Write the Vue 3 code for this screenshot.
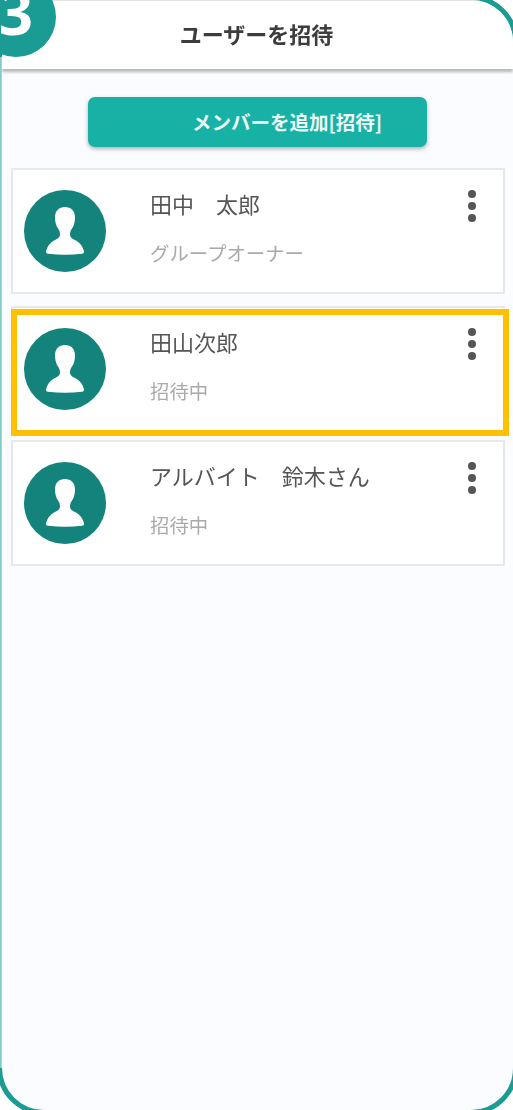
<template>
  <div class="page">
    <div class="frame">
      <header class="head">ユーザーを招待</header>

      <div class="btn-wrap">
        <button class="add-btn">メンバーを追加[招待]</button>
      </div>

      <div class="list">
        <div v-for="m in members" :key="m.name" class="card" :class="{ picked: m.picked }">
          <svg class="avatar" viewBox="0 0 82 82">
            <circle cx="41" cy="41" r="41" fill="#14837b" />
            <path
              fill="#fff"
              d="M41 17c-6 0-10 4-10 10.500 0 4.500 1 8 3 11 1.500 2.200 2 4 2 6 0 3-2.500 4.500-6 6-4 2.500-7 6-8 11-.2 1.200.5 2 2 2.200 11.500 1.300 22.500 1.300 34 0 1.500-.2 2.200-1 2-2.200-1-5-4-8.500-8-11-3.500-1.500-6-3-6-6 0-2 .5-3.800 2-6 2-3 3-6.500 3-11 0-6.500-4-10.500-10-10.500z"
            />
          </svg>
          <div class="info">
            <div class="name">{{ m.name }}</div>
            <div class="role">{{ m.role }}</div>
          </div>
          <div class="more"><i></i><i></i><i></i></div>
          <div v-if="m.picked" class="mark"></div>
        </div>
      </div>
    </div>

    <!-- 左端の薄い線 -->
    <div class="edge"></div>
    <div class="step">3</div>
  </div>
</template>

<script setup>
const members = [
  { name: '田中　太郎', role: 'グループオーナー' },
  { name: '田山次郎', role: '招待中', picked: true },
  { name: 'アルバイト　鈴木さん', role: '招待中' }
]
</script>

<style>
html, body {
  margin: 0;
  background: #fff;
  overflow: hidden;
}
</style>

<style scoped>
.page {
  position: relative;
  width: 513px;
  height: 1110px;
  overflow: hidden;
  font-family: "Noto Sans CJK JP", "Liberation Sans", sans-serif;
}
.frame {
  box-sizing: border-box;
  width: 521px;
  height: 1120px;
  margin: -5px 0 0 -3px;
  border: 5px solid #1a9b93;
  border-radius: 47px;
  background: #fafcff;
  overflow: hidden;
}
.edge {
  position: absolute;
  left: 0;
  top: 57px;
  bottom: 42px;
  width: 2px;
  background: linear-gradient(to right, #7fcbc6 50%, #c4e6e4);
}
.step {
  position: absolute;
  left: -24px;
  top: -23px;
  width: 80px;
  height: 80px;
  border-radius: 50%;
  background: #1a9b93;
  color: #fff;
  font-family: "Open Sans", sans-serif;
  font-size: 60px;
  font-weight: 700;
  line-height: 70px;
  text-align: center;
}
.head {
  box-sizing: border-box;
  height: 69px;
  padding-right: 2px;
  border-top: 1px solid #e4e4e4;
  background: #fff;
  box-shadow: 0 3px 3px rgba(0, 0, 0, 0.28);
  color: #3c3c3c;
  font-size: 22px;
  font-weight: 700;
  line-height: 65px;
  text-align: center;
  filter: blur(0.4px);
}
.btn-wrap {
  padding: 28px 0 0 86px;
}
.add-btn {
  display: block;
  box-sizing: border-box;
  width: 339px;
  height: 50px;
  padding: 0 0 0 104px;
  border: 0;
  border-radius: 7px;
  background: #17b1a6;
  box-shadow: 0 2px 4px rgba(0, 0, 0, 0.3);
  color: #eefaf8;
  font-family: inherit;
  font-size: 19.5px;
  font-weight: 700;
  line-height: 50px;
  text-align: left;
  white-space: nowrap;
}
.list {
  display: flex;
  flex-direction: column;
  gap: 12px;
  padding: 21px 8px 0 9px;
}
.card {
  position: relative;
  display: flex;
  box-sizing: border-box;
  height: 126px;
  border: 2px solid #e6e8ea;
  background: #fff;
}
.card:last-child {
  margin-top: -4px;
}
.avatar {
  flex: none;
  width: 82px;
  height: 82px;
  margin: 20px 0 0 11px;
}
.info {
  flex: 1;
  padding: 18px 0 0 44px;
  filter: blur(0.3px);
}
.name {
  color: #555;
  font-size: 22px;
  line-height: 30px;
}
.role {
  margin-top: 21px;
  color: #aaa;
  font-size: 19.4px;
  line-height: 28px;
}
.more {
  display: flex;
  flex: none;
  flex-direction: column;
  gap: 4px;
  width: 35px;
  padding-top: 20px;
}
.more i {
  display: block;
  width: 8px;
  height: 8px;
  border-radius: 50%;
  background: #555;
}
/* 黄色の強調枠 */
.mark {
  position: absolute;
  top: 1px;
  left: -2px;
  right: -6px;
  height: 127px;
  box-sizing: border-box;
  border: 6px solid #ffc000;
}
</style>
